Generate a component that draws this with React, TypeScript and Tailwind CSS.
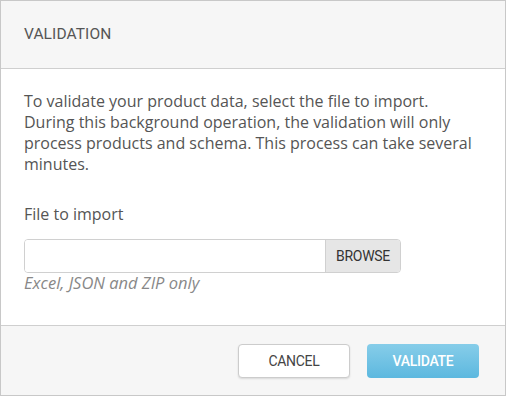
import React from 'react';

const App: React.FC = () => {
  return (
    <div className="w-[506px] h-[396px] bg-white border border-[#c8c8c8] flex flex-col overflow-hidden">
      <div className="h-[68px] shrink-0 bg-[#f6f6f6] border-b border-[#cfcfcf] flex items-center px-[23px]">
        <h2 className="font-['Roboto',sans-serif] text-[15.5px] text-[#555] tracking-[0.1px] pt-[1px]">VALIDATION</h2>
      </div>

      <div className="flex-1 px-[23px] pt-[22px] font-['Open_Sans',sans-serif] text-[#555]">
        <p className="max-w-[452px] text-[16px] leading-[21px]">
          To validate your product data, select the file to import. During this background operation, the validation will only process products and schema. This process can take several minutes.
        </p>
        <label className="block mt-[29px] text-[16px] leading-[21px]">File to import</label>
        <div className="mt-[14px] w-[377px] h-[34px] flex border border-[#d0d0d0] rounded-[4px] overflow-hidden">
          <input type="text" className="flex-1 outline-none bg-white px-2" />
          <button className="w-[75px] bg-[#e6e6e6] border-l border-[#d0d0d0] font-['Roboto',sans-serif] text-[14px] tracking-[-0.3px] text-[#333]">
            BROWSE
          </button>
        </div>
        <p className="italic text-[16.5px] leading-[20px] text-[#888]">Excel, JSON and ZIP only</p>
      </div>

      <div className="h-[70px] shrink-0 bg-[#f6f6f6] border-t border-[#cfcfcf] flex items-start justify-end gap-[17px] pt-[18px] pr-[26px]">
        <button className="w-[112px] h-[34px] bg-white border border-[#ccc] rounded-[4px] shadow-[0_1px_2px_rgba(0,0,0,0.12)] font-['Roboto',sans-serif] text-[14px] tracking-[-0.3px] text-[#444]">
          CANCEL
        </button>
        <button className="w-[112px] h-[34px] rounded-[4px] bg-gradient-to-b from-[#86cde9] to-[#5cb8df] font-['Roboto',sans-serif] font-medium text-[14px] tracking-[-0.3px] text-white">
          VALIDATE
        </button>
      </div>
    </div>
  );
};

export default App;
